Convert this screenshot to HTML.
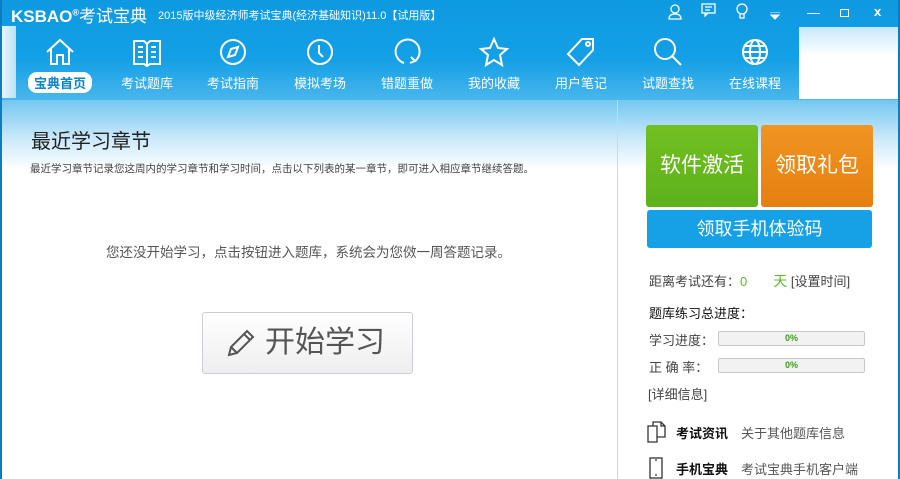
<!DOCTYPE html>
<html><head><meta charset="utf-8"><style>
*{margin:0;padding:0;box-sizing:border-box}
body{width:900px;height:479px;overflow:hidden;background:#fff;font-family:"Liberation Sans","Noto Sans CJK SC",sans-serif;position:relative}
.top{position:absolute;left:0;top:0;width:900px;height:100px;background:linear-gradient(#0e99e0 0,#14a0e6 60px,#4ab6ec 100px);}
.strip{position:absolute;left:2px;top:26px;width:14px;height:72px;background:linear-gradient(90deg,#e8f5fc,#b9e2f7)}
.wbox{position:absolute;left:799px;top:27px;width:99px;height:72px;background:linear-gradient(#c7e9f9,#fff 40%)}
.logo{position:absolute;left:11px;top:2px;color:#fff;font-weight:bold;font-size:17px;letter-spacing:0}
.title{position:absolute;left:158px;top:7px;color:#fff;font-size:11px}
.nav{position:absolute;top:36px;width:80px;text-align:center;color:#fff;font-size:13px}
.nav svg{display:block;margin:0 auto 4px;width:32px;height:32px}
.nav span{display:inline-block;padding:1px 6px}
.sel span{background:#fff;color:#0f86c8;border-radius:9px;font-weight:bold}
.ctl{position:absolute;top:3px;color:#fff;font-size:13px}
.content{position:absolute;left:0;top:100px;width:900px;height:379px;background:linear-gradient(#74c7f0 0,#cdeafa 40px,#fff 70px)}
.border{position:absolute;left:0;top:0;width:2px;height:479px;background:#0e7cc0}
.rborder{position:absolute;right:0;top:0;width:2px;height:479px;background:#0e7cc0}
.div{position:absolute;left:617px;top:100px;width:1px;height:379px;background:#c9d8e2}
h1{position:absolute;left:31px;top:125px;font-size:20px;font-weight:normal;color:#222}
.sub{position:absolute;left:30px;top:161px;font-size:10.5px;color:#444}
.empty{position:absolute;left:0;width:617px;top:241px;text-align:center;font-size:13.5px;color:#555}
.start{position:absolute;left:202px;top:312px;width:211px;height:62px;border:1px solid #ccd;border-radius:3px;background:linear-gradient(#fff,#eee);font-size:30px;color:#555;line-height:60px;padding-left:62px}
.start svg{position:absolute;left:22px;top:14px}
.btn{position:absolute;color:#fff;text-align:center;border-radius:3px}
.r{position:absolute;font-size:13px;color:#444}
.bar{position:absolute;left:718px;width:147px;height:15px;border:1px solid #c8c8c8;border-radius:2px;background:#f2f2f2;text-align:center;font-size:9px;color:#3a9e1a;font-weight:bold;line-height:13px}
</style></head><body>
<div class="top"></div>
<div class="strip"></div>
<div class="wbox"></div>
<div class="logo">KSBAO<sup style="font-size:9px">®</sup><span style="font-weight:normal;font-size:17px">考试宝典</span></div>
<div class="title">2015版中级经济师考试宝典(经济基础知识)11.0【试用版】</div>
<div class="ctl" style="left:667px"><svg width="16" height="18" viewBox="0 0 16 18" fill="none" stroke="#fff" stroke-width="1.3"><circle cx="8" cy="6" r="4"/><path d="M2 16c0-4 3-5 6-5s6 1 6 5z"/></svg></div>
<div class="ctl" style="left:701px"><svg width="15" height="14" viewBox="0 0 15 14" fill="none" stroke="#fff" stroke-width="1.3"><rect x="1" y="1" width="13" height="9"/><path d="M4 10l0 3 3-3M4 4h7M4 7h5"/></svg></div>
<div class="ctl" style="left:736px"><svg width="12" height="17" viewBox="0 0 12 17" fill="none" stroke="#fff" stroke-width="1.3"><circle cx="6" cy="6" r="5"/><path d="M4 11v4h4v-4"/></svg></div>
<div class="ctl" style="left:770px;top:8px"><svg width="10" height="8"><path d="M0 0h10M1 3h8l-4 4z" stroke="#fff" fill="#fff"/></svg></div>
<div class="ctl" style="left:807px;top:5px">—</div>
<div class="ctl" style="left:840px;top:9px;width:9px;height:8px;border:1px solid #fff"></div>
<div class="ctl" style="left:874px;top:4px;font-weight:bold">x</div>

<div class="nav sel" style="left:20px"><svg viewBox="0 0 32 32" fill="none" stroke="#fff" stroke-width="2"><path d="M3 16L16 4l13 12M7 13v15h6v-9h6v9h6V13"/></svg><span>宝典首页</span></div>
<div class="nav" style="left:107px"><svg viewBox="0 0 32 32" fill="none" stroke="#fff" stroke-width="2"><path d="M3 5h10l3 3 3-3h10v23H19l-3 2-3-2H3zM16 8v22M7 11h5M7 16h5M7 21h5M20 11h5M20 16h5M20 21h5"/></svg><span>考试题库</span></div>
<div class="nav" style="left:193px"><svg viewBox="0 0 32 32" fill="none" stroke="#fff" stroke-width="2"><circle cx="16" cy="16" r="12"/><path d="M21 11l-3 8-7 2 3-8z"/></svg><span>考试指南</span></div>
<div class="nav" style="left:280px"><svg viewBox="0 0 32 32" fill="none" stroke="#fff" stroke-width="2"><circle cx="16" cy="16" r="12"/><path d="M15 9v8l4 4"/></svg><span>模拟考场</span></div>
<div class="nav" style="left:367px"><svg viewBox="0 0 32 32" fill="none" stroke="#fff" stroke-width="2"><path d="M13 27A12 12 0 1 1 24 25M20 21l4 4-5 2"/></svg><span>错题重做</span></div>
<div class="nav" style="left:454px"><svg viewBox="0 0 32 32" fill="none" stroke="#fff" stroke-width="2"><path d="M16 3l4 9 9 1-7 6 2 10-8-5-8 5 2-10-7-6 9-1z"/></svg><span>我的收藏</span></div>
<div class="nav" style="left:541px"><svg viewBox="0 0 32 32" fill="none" stroke="#fff" stroke-width="2"><path d="M17 3h11v11L14 29 3 18z"/><circle cx="23" cy="8" r="2"/></svg><span>用户笔记</span></div>
<div class="nav" style="left:628px"><svg viewBox="0 0 32 32" fill="none" stroke="#fff" stroke-width="2"><circle cx="13" cy="13" r="10"/><path d="M20 20l9 9"/></svg><span>试题查找</span></div>
<div class="nav" style="left:715px"><svg viewBox="0 0 32 32" fill="none" stroke="#fff" stroke-width="2"><circle cx="16" cy="16" r="12"/><ellipse cx="16" cy="16" rx="5" ry="12"/><path d="M4 16h24M6 10h20M6 22h20"/></svg><span>在线课程</span></div>

<div class="content"></div>
<div class="div"></div>
<div class="border"></div><div class="rborder"></div>
<h1>最近学习章节</h1>
<div class="sub">最近学习章节记录您这周内的学习章节和学习时间，点击以下列表的某一章节，即可进入相应章节继续答题。</div>
<div class="empty">您还没开始学习，点击按钮进入题库，系统会为您傚一周答题记录。</div>
<div class="start"><svg width="32" height="32" viewBox="0 0 32 32" fill="none" stroke="#555" stroke-width="2"><path d="M4 28l2-8L22 4l6 6-16 16zM6 20l6 6M19 7l6 6"/></svg>开始学习</div>

<div class="btn" style="left:646px;top:125px;width:112px;height:82px;background:linear-gradient(#72c021,#5db11b);font-size:21px;line-height:82px">软件激活</div>
<div class="btn" style="left:761px;top:125px;width:112px;height:82px;background:linear-gradient(#f09422,#e57f10);font-size:21px;line-height:82px">领取礼包</div>
<div class="btn" style="left:647px;top:210px;width:225px;height:38px;background:#16a1e6;font-size:18px;line-height:38px">领取手机体验码</div>

<div class="r" style="left:649px;top:271px">距离考试还有：<span style="color:#5cb82a">0</span><span style="color:#5cb82a;margin-left:26px;font-size:14px">天</span> [设置时间]</div>
<div class="r" style="left:649px;top:303px;color:#111">题库练习总进度：</div>
<div class="r" style="left:649px;top:330px">学习进度：</div><div class="bar" style="top:331px">0%</div>
<div class="r" style="left:649px;top:357px">正 确 率：</div><div class="bar" style="top:358px">0%</div>
<div class="r" style="left:648px;top:384px">[详细信息]</div>
<svg style="position:absolute;left:647px;top:421px" width="19" height="22" viewBox="0 0 19 22" fill="none" stroke="#333" stroke-width="1.3"><path d="M1 5h9v16H1zM6 5V1h8l4 4v11h-8M14 1v4h4"/></svg>
<div class="r" style="left:676px;top:423px;color:#111;font-weight:bold">考试资讯<span style="font-weight:normal;color:#555;margin-left:13px">关于其他题库信息</span></div>
<svg style="position:absolute;left:648px;top:457px" width="16" height="22" viewBox="0 0 16 22" fill="none" stroke="#333" stroke-width="1.3"><rect x="2" y="1" width="12" height="20"/><path d="M7 18h2M7 3h2"/></svg>
<div class="r" style="left:676px;top:459px;color:#111;font-weight:bold">手机宝典<span style="font-weight:normal;color:#555;margin-left:13px">考试宝典手机客户端</span></div>
</body></html>
